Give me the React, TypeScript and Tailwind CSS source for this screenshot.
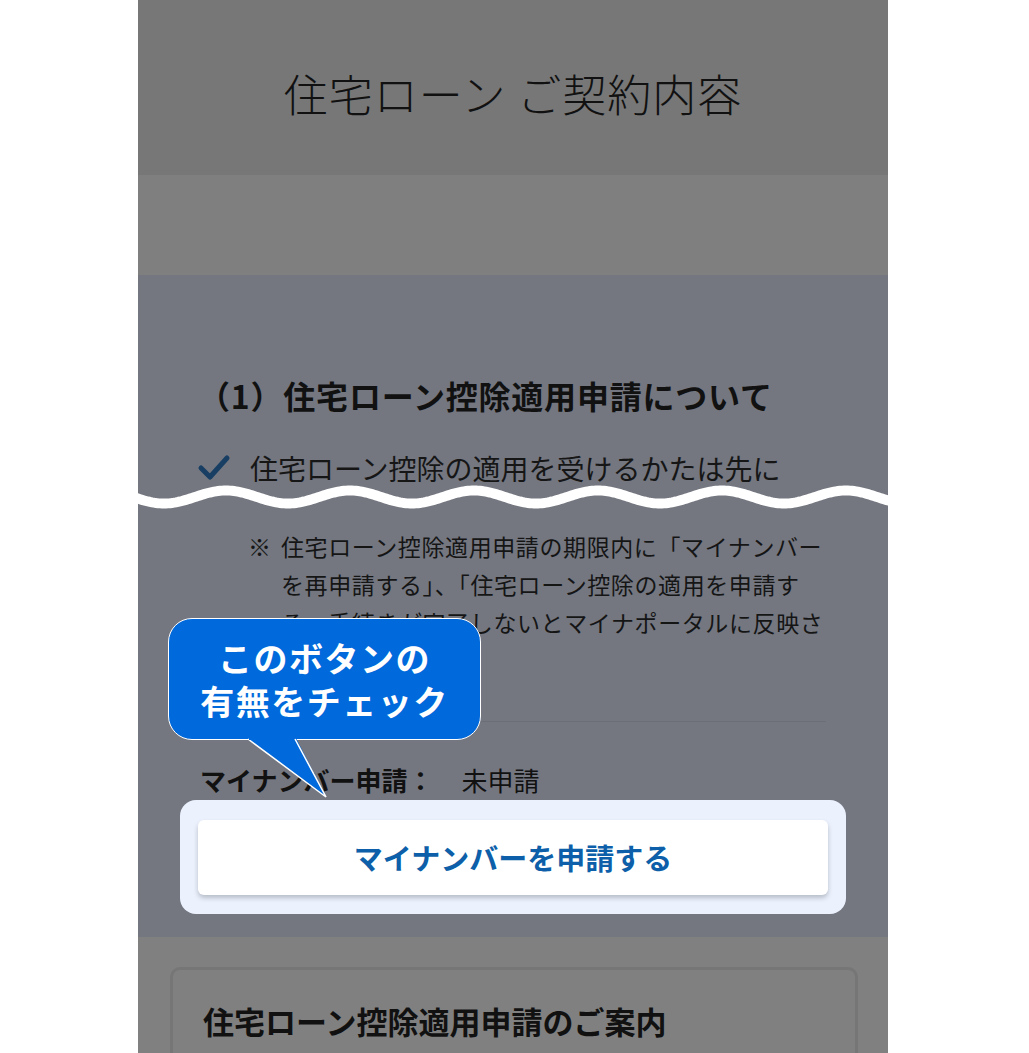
import React from "react";

const FONT = { fontFamily: '"Noto Sans CJK JP", "Noto Sans", sans-serif' };

const Wave: React.FC = () => {
  // wavy cut line showing omitted content
  const pts: string[] = [];
  for (let x = -10; x <= 760; x += 2) {
    const y = 13 - 6.5 * Math.cos((2 * Math.PI * (x - 88)) / 124);
    pts.push(`${x},${y.toFixed(2)}`);
  }
  return (
    <svg width="750" height="26" viewBox="0 0 750 26" className="block">
      <polyline points={pts.join(" ")} fill="none" stroke="#ffffff" strokeWidth="10" />
    </svg>
  );
};

const Bubble: React.FC = () => (
  <div className="absolute left-[30px] top-[343px] w-[313px]">
    <div className="relative z-10 h-[122px] rounded-[24px] border-[1.5px] border-white bg-[#0069db] flex flex-col items-center justify-center text-white font-bold text-[34px] leading-[43px] tracking-[1.5px]">
      <span>このボタンの</span>
      <span>有無をチェック</span>
    </div>
    <svg width="100" height="70" viewBox="0 0 100 70" className="absolute left-[70px] top-[118px] z-20">
      <polygon points="10,0 57,0 88,61 10,3" fill="#0069db" />
      <polyline points="10,3 88,61 57,3" fill="none" stroke="#ffffff" strokeWidth="1.5" />
      <rect x="11" y="0" width="45" height="4" fill="#0069db" />
    </svg>
  </div>
);

const App: React.FC = () => {
  return (
    <div className="min-h-screen bg-white" style={FONT}>
      <div className="ml-[138px] w-[750px] h-[1053px] overflow-hidden">
        <div className="h-[175px] bg-[#777777] flex items-center justify-center pt-[10px]">
          <h1 className="text-[44px] font-light text-[#111] tracking-[1px]">住宅ローン ご契約内容</h1>
        </div>
        <div className="h-[100px] bg-[#7f7f7f]" />

        <div className="relative bg-[#747780] pt-[98px] pb-[23px]">
          <h2 className="pl-[60px] text-[32px] leading-[45px] font-bold text-[#111] tracking-[0.8px]">
            （1）住宅ローン控除適用申請について
          </h2>
          <div className="mt-[30px] flex items-center px-[59px] h-[40px]">
            <svg width="34" height="28" viewBox="0 0 34 28" className="mr-[19px]">
              <polyline points="4,14 13,23 30,4" fill="none" stroke="#183f63" strokeWidth="5" strokeLinecap="round" strokeLinejoin="round" />
            </svg>
            <span className="text-[28px] text-[#161616]">住宅ローン控除の適用を受けるかたは先に</span>
          </div>
          <div className="-mt-[4px]">
            <Wave />
          </div>
          <div className="mt-[17px] flex pl-[110px] text-[23px] leading-[38px] text-[#151515] tracking-[0.6px]">
            <span className="w-[33px] shrink-0">※</span>
            <div className="flex flex-col whitespace-nowrap">
              <span>住宅ローン控除適用申請の期限内に「マイナンバー</span>
              <span>を再申請する」、「住宅ローン控除の適用を申請す</span>
              <span>る」手続きが完了しないとマイナポータルに反映さ</span>
            </div>
          </div>
          <div className="mx-[62px] mt-[80px] border-t border-[#6a6e77]" />
          <div className="mt-[39px] px-[62px] flex items-center h-[36px] text-[26px] text-[#111]">
            <span className="font-bold">マイナンバー申請：</span>
            <span className="ml-[28px]">未申請</span>
          </div>
          <div className="mx-[42px] mt-[3px] rounded-[16px] bg-[#ebf2fe] px-[18px] pt-[20px] pb-[19px]">
            <div className="h-[75px] rounded-[6px] bg-white shadow-[0_3px_5px_rgba(0,0,0,0.22)] flex items-center justify-center text-[29px] font-bold text-[#0c5fa8]">
              マイナンバーを申請する
            </div>
          </div>
          <Bubble />
        </div>

        <div className="bg-[#808080] pt-[30px] pl-[32px] pr-[30px]">
          <div className="rounded-[10px] border-[3px] border-[#767676] px-[30px] pt-[28px] h-[200px]">
            <h3 className="text-[31px] font-bold text-[#111]">住宅ローン控除適用申請のご案内</h3>
          </div>
        </div>
      </div>
    </div>
  );
};

export default App;
